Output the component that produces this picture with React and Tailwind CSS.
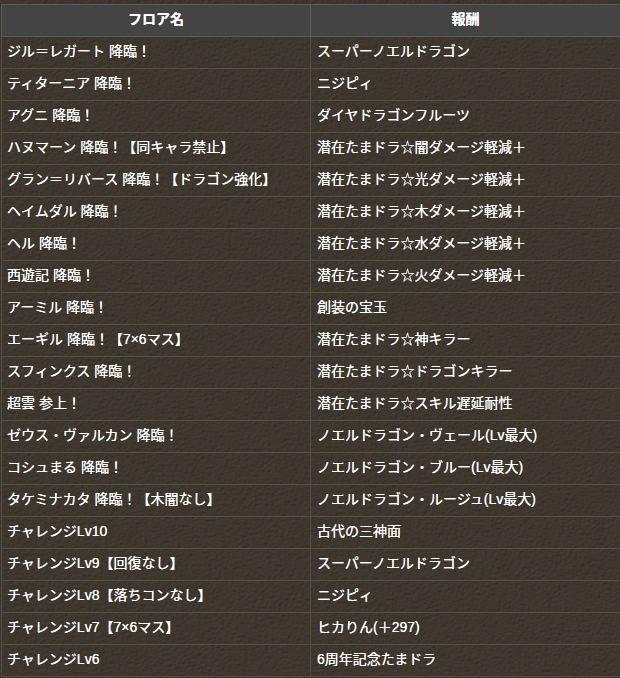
const rows = [
  ["ジル＝レガート 降臨！", "スーパーノエルドラゴン"],
  ["ティターニア 降臨！", "ニジピィ"],
  ["アグニ 降臨！", "ダイヤドラゴンフルーツ"],
  ["ハヌマーン 降臨！【同キャラ禁止】", "潜在たまドラ☆闇ダメージ軽減＋"],
  ["グラン＝リバース 降臨！【ドラゴン強化】", "潜在たまドラ☆光ダメージ軽減＋"],
  ["ヘイムダル 降臨！", "潜在たまドラ☆木ダメージ軽減＋"],
  ["ヘル 降臨！", "潜在たまドラ☆水ダメージ軽減＋"],
  ["西遊記 降臨！", "潜在たまドラ☆火ダメージ軽減＋"],
  ["アーミル 降臨！", "創装の宝玉"],
  ["エーギル 降臨！【7×6マス】", "潜在たまドラ☆神キラー"],
  ["スフィンクス 降臨！", "潜在たまドラ☆ドラゴンキラー"],
  ["超雲 参上！", "潜在たまドラ☆スキル遅延耐性"],
  ["ゼウス・ヴァルカン 降臨！", "ノエルドラゴン・ヴェール(Lv最大)"],
  ["コシュまる 降臨！", "ノエルドラゴン・ブルー(Lv最大)"],
  ["タケミナカタ 降臨！【木闇なし】", "ノエルドラゴン・ルージュ(Lv最大)"],
  ["チャレンジLv10", "古代の三神面"],
  ["チャレンジLv9【回復なし】", "スーパーノエルドラゴン"],
  ["チャレンジLv8【落ちコンなし】", "ニジピィ"],
  ["チャレンジLv7【7×6マス】", "ヒカりん(＋297)"],
  ["チャレンジLv6", "6周年記念たまドラ"],
];

function Texture() {
  return (
    <svg className="absolute inset-0 w-full h-full" aria-hidden="true">
      <filter id="leather" x="0" y="0" width="100%" height="100%">
        <feTurbulence type="fractalNoise" baseFrequency="0.3 0.38" numOctaves="3" seed="7" />
        <feDiffuseLighting surfaceScale="1.1" diffuseConstant="1" lightingColor="#433a30">
          <feDistantLight azimuth="235" elevation="62" />
        </feDiffuseLighting>
      </filter>
      <rect width="100%" height="100%" filter="url(#leather)" />
    </svg>
  );
}

export default function App() {
  return (
    <div
      className="relative w-[620px] h-[678px] overflow-hidden bg-[#3a3128] text-white"
      style={{ fontFamily: '"Liberation Sans", "Noto Sans CJK JP", sans-serif' }}
    >
      <Texture />
      <div className="relative pt-1 pl-px w-[640px]">
        <table className="w-[640px] table-fixed border-collapse text-[14px] leading-[28px] text-white [text-shadow:0_0_0.5px_#ffffff]">
          <colgroup>
            <col className="w-[309px]" />
            <col />
          </colgroup>
          <thead>
            <tr className="h-8 bg-[#444444] font-bold">
              <th className="border border-[#5a5a5a] p-0 pb-[3px] text-center">フロア名</th>
              <th className="border border-[#5a5a5a] p-0 pb-[3px] pr-[20px] text-center">報酬</th>
            </tr>
          </thead>
          <tbody>
            {rows.map(([floor, reward]) => (
              <tr key={floor} className="h-8">
                <td className="border border-[#554d44] pl-[5px] pr-[6px] pt-0 pb-[3px] whitespace-nowrap">{floor}</td>
                <td className="border border-[#554d44] px-[6px] pt-0 pb-[3px] whitespace-nowrap">{reward}</td>
              </tr>
            ))}
          </tbody>
        </table>
      </div>
    </div>
  );
}
